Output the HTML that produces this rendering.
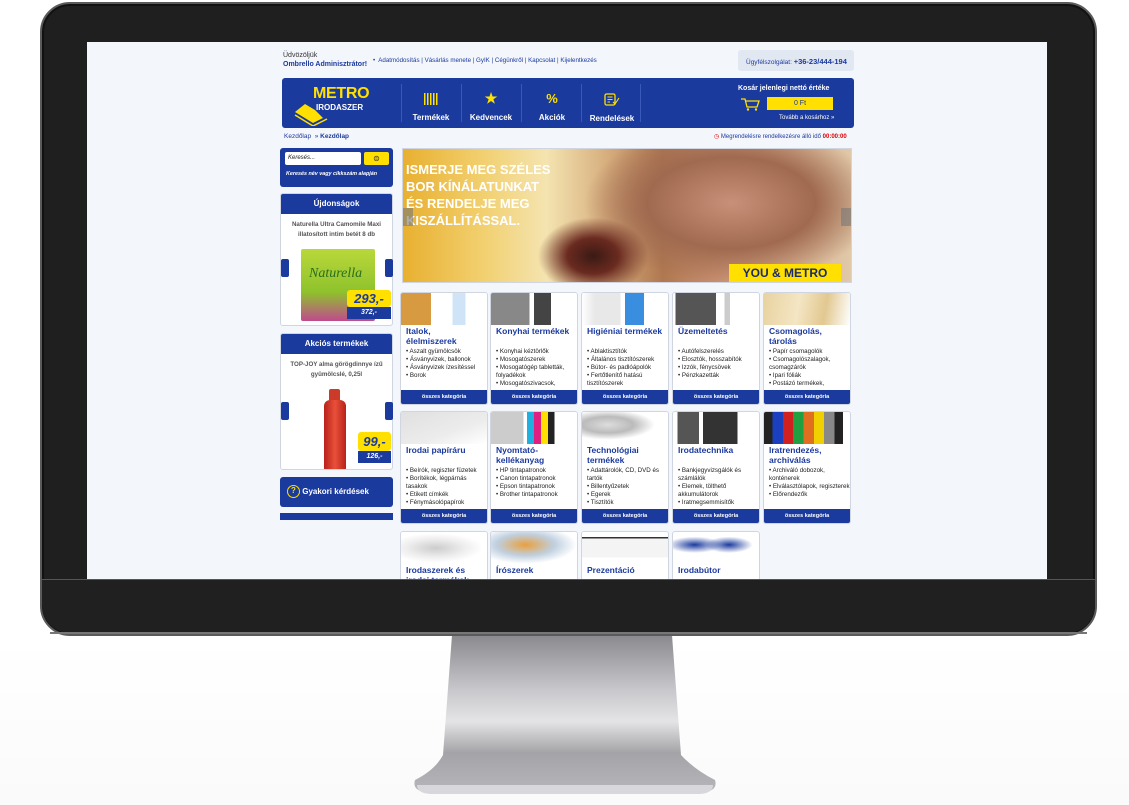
<!DOCTYPE html>
<html><head><meta charset="utf-8"><style>
*{margin:0;padding:0;box-sizing:border-box}
body{width:1129px;height:805px;background:#fff;position:relative;overflow:hidden;font-family:"Liberation Sans",Arial,sans-serif}
.a{position:absolute}
.bezel{left:40px;top:2px;width:1057px;height:634px;background:#1f1f1f;border-radius:30px;border:2px solid #5a5a5a;box-shadow:inset 0 0 0 2px #111}
.screen{left:87px;top:42px;width:960px;height:537px;background:#f3f6fb;overflow:hidden}
.blue{background:#1b3a9e}
.t{font-size:7px;color:#333;white-space:nowrap}
.card{position:absolute;width:88px;height:113px;background:#fff;border:1px solid #cfd6e2;border-radius:3px;overflow:hidden}
.card h4{position:absolute;left:5px;top:33px;font-size:8.5px;color:#1b3a9e;line-height:10px;font-weight:bold}
.card ul{position:absolute;left:5px;top:55px;font-size:6.2px;color:#222;line-height:8px;list-style:none;width:82px}
.card ul li:before{content:"• ";}
.card .btn{position:absolute;left:0;bottom:0;width:100%;height:14px;background:#1b3a9e;color:#fff;font-size:5.5px;font-weight:bold;text-align:center;line-height:14px}
.card .img{position:absolute;left:0;top:0;width:100%;height:32px}
.side{position:absolute;left:280px;width:113px;background:#fff;border:1px solid #cfd6e2;border-radius:3px;overflow:hidden}
.side .hd{height:20px;background:#1b3a9e;color:#fff;font-size:8px;font-weight:bold;text-align:center;line-height:20px}
.arrow{position:absolute;width:8px;height:18px;background:#1b3a9e;border-radius:2px}
.nav{position:absolute;top:78px;width:60px;height:50px;text-align:center;color:#fff;font-size:8px;font-weight:bold}
</style></head><body>
<div class="a" style="left:0;top:640px;width:1129px;height:165px;background:linear-gradient(#fff,#fafafa)"></div>
<svg class="a" style="left:395px;top:630px" width="340" height="175">
<defs><linearGradient id="g" x1="0" y1="0" x2="0" y2="1"><stop offset="0" stop-color="#8a8a8e"/><stop offset=".35" stop-color="#c8c8cc"/><stop offset=".55" stop-color="#e4e4e6"/><stop offset=".75" stop-color="#a4a4a8"/><stop offset="1" stop-color="#b6b6ba"/></linearGradient></defs>
<path d="M57 5 L277 5 L286 125 Q300 140 320 150 Q323 160 310 162 L30 162 Q17 160 20 150 Q40 140 48 125 Z" fill="url(#g)"/>
<path d="M22 155 L318 155 Q318 163 305 164 L35 164 Q22 163 22 155Z" fill="#d8d8dc"/>
</svg>
<div class="a bezel"></div>
<div class="a screen"></div>
<div class="a t" style="left:283px;top:52px;color:#333">Üdvözöljük</div>
<div class="a t" style="left:283px;top:61px;color:#1b3a9e;font-weight:bold">Ombrello Adminisztrátor!</div>
<div class="a t" style="left:373px;top:57px;font-size:6.2px;color:#1b3a9e">•&nbsp; Adatmódosítás | Vásárlás menete | GyIK | Cégünkről | Kapcsolat | Kijelentkezés</div>
<div class="a" style="left:738px;top:50px;width:116px;height:21px;background:#e2e8f2;border-radius:3px"></div>
<div class="a t" style="left:746px;top:57px;font-size:6.5px;color:#1b3a9e">Ügyfélszolgálat: <b style="font-size:7.5px">+36-23/444-194</b></div>
<div class="a blue" style="left:282px;top:78px;width:572px;height:50px;border-radius:3px"></div>
<div class="a" style="left:313px;top:85px;font-size:16px;font-weight:900;color:#ffe000;letter-spacing:-0.3px">METRO</div>
<div class="a" style="left:316px;top:103px;font-size:8px;font-weight:bold;color:#fff">IRODASZER</div>
<svg class="a" style="left:293px;top:100px" width="40" height="26"><path d="M2 12 L12 4 L22 10 L30 18 L20 23 Z" fill="#ffe000"/><path d="M2 15 L20 26 L34 19" stroke="#ffe000" fill="none" stroke-width="1.5"/></svg>
<div class="a" style="left:401px;top:84px;width:1px;height:38px;background:#3a58b8"></div>
<div class="a" style="left:461px;top:84px;width:1px;height:38px;background:#3a58b8"></div>
<div class="a" style="left:521px;top:84px;width:1px;height:38px;background:#3a58b8"></div>
<div class="a" style="left:581px;top:84px;width:1px;height:38px;background:#3a58b8"></div>
<div class="a" style="left:640px;top:84px;width:1px;height:38px;background:#3a58b8"></div>
<div class="nav" style="left:401px"><div style="margin-top:15px;height:12px;width:15px;margin-left:23px;background:repeating-linear-gradient(90deg,#ffe000 0 1.5px,transparent 1.5px 3px)"></div><div style="margin-top:8px">Termékek</div></div>
<div class="nav" style="left:461px"><div style="margin-top:12px;height:14px;color:#ffe000;font-size:14px">★</div><div style="margin-top:9px">Kedvencek</div></div>
<div class="nav" style="left:522px"><div style="margin-top:13px;height:14px;color:#ffe000;font-size:13px">%</div><div style="margin-top:8px">Akciók</div></div>
<div class="nav" style="left:582px"><svg style="margin-top:15px" width="16" height="13"><rect x="1" y="1" width="10" height="11" rx="1.5" stroke="#ffe000" fill="none" stroke-width="1.3"/><path d="M3.5 4H8.5M3.5 6.5H8.5M3.5 9H6M9 9L11 11L15 5" stroke="#ffe000" fill="none" stroke-width="1.1"/></svg><div style="margin-top:6px">Rendelések</div></div>
<div class="a" style="left:738px;top:85px;font-size:7px;font-weight:bold;color:#fff">Kosár jelenlegi nettó értéke</div>
<svg class="a" style="left:740px;top:97px" width="20" height="14"><path d="M1 2 L5 2 L7 10 L17 10 L19 4 L6 4" stroke="#ffe000" fill="none" stroke-width="1.3"/><circle cx="8" cy="12.5" r="1.2" fill="#ffe000"/><circle cx="16" cy="12.5" r="1.2" fill="#ffe000"/></svg>
<div class="a" style="left:767px;top:97px;width:66px;height:13px;background:#ffe000;font-size:7px;color:#1b3a9e;text-align:center;line-height:13px">0 Ft</div>
<div class="a" style="left:779px;top:115px;font-size:6px;color:#fff">Tovább a kosárhoz »</div>
<div class="a t" style="left:284px;top:133px;font-size:6.5px;color:#1b3a9e">Kezdőlap &nbsp;» <b>Kezdőlap</b></div>
<div class="a t" style="left:714px;top:133px;font-size:6px;color:#1b3a9e"><span style="color:#d00">◷</span> Megrendelésre rendelkezésre álló idő <b style="color:#d00">00:00:00</b></div>
<div class="a blue" style="left:280px;top:148px;width:113px;height:39px;border-radius:3px"></div>
<div class="a" style="left:285px;top:152px;width:76px;height:13px;background:#fff;border-radius:2px;font-size:6px;font-style:italic;padding:3px 3px;color:#222">Keresés...</div>
<div class="a" style="left:364px;top:152px;width:25px;height:13px;background:#ffe000;border-radius:2px;text-align:center;font-size:8px;line-height:13px;color:#333">⊜</div>
<div class="a" style="left:286px;top:171px;font-size:5.4px;font-style:italic;font-weight:bold;color:#fff">Keresés név vagy cikkszám alapján</div>
<div class="side" style="top:193px;height:133px"><div class="hd">Újdonságok</div>
<div style="font-size:6.2px;color:#555;font-weight:bold;text-align:center;margin-top:6px;line-height:10px">Naturella Ultra Camomile Maxi<br>illatosított intim betét 8 db</div>
<div class="a" style="left:20px;top:55px;width:74px;height:72px;background:linear-gradient(#b9d83a,#8fc22c 60%,#c04a8e);border-radius:2px"></div>
<div class="a" style="left:28px;top:72px;font-size:14px;font-style:italic;color:#2a6d1e;font-family:'Liberation Serif',serif">Naturella</div>
<div class="a" style="left:66px;top:96px;width:44px;height:17px;background:#ffe000;border-radius:3px;color:#1b3a9e;font-size:13px;font-weight:bold;font-style:italic;text-align:center;line-height:17px">293,-</div>
<div class="a" style="left:66px;top:113px;width:44px;height:12px;background:#1b3a9e;color:#fff;font-size:7px;font-weight:bold;font-style:italic;text-align:center;line-height:12px">372,-</div>
</div>
<div class="arrow" style="left:281px;top:259px"></div><div class="arrow" style="left:385px;top:259px"></div>
<div class="side" style="top:333px;height:137px"><div class="hd">Akciós termékek</div>
<div style="font-size:6.2px;color:#555;font-weight:bold;text-align:center;margin-top:6px;line-height:10px">TOP-JOY alma görögdinnye ízű<br>gyümölcslé, 0,25l</div>
<div class="a" style="left:48px;top:55px;width:11px;height:12px;background:#cc3a2a;border-radius:2px 2px 0 0"></div>
<div class="a" style="left:43px;top:66px;width:22px;height:70px;background:linear-gradient(90deg,#b8221a,#e8503a,#b8221a);border-radius:6px 6px 2px 2px"></div>
<div class="a" style="left:77px;top:98px;width:33px;height:19px;background:#ffe000;border-radius:3px;color:#1b3a9e;font-size:13px;font-weight:bold;font-style:italic;text-align:center;line-height:19px">99,-</div>
<div class="a" style="left:77px;top:117px;width:33px;height:12px;background:#1b3a9e;color:#fff;font-size:7px;font-weight:bold;font-style:italic;text-align:center;line-height:12px">126,-</div>
</div>
<div class="arrow" style="left:281px;top:402px"></div><div class="arrow" style="left:385px;top:402px"></div>
<div class="a blue" style="left:280px;top:477px;width:113px;height:30px;border-radius:3px;color:#fff;font-size:8px;font-weight:bold;line-height:30px;padding-left:7px"><span style="display:inline-block;width:13px;height:13px;border:1.5px solid #ffe000;border-radius:50%;color:#ffe000;text-align:center;line-height:10px;font-size:8px;vertical-align:middle">?</span> Gyakori kérdések</div>
<div class="a blue" style="left:280px;top:513px;width:113px;height:7px"></div>
<div class="a" style="left:402px;top:148px;width:450px;height:135px;border:1px solid #cfd6e2;overflow:hidden;background:linear-gradient(90deg,#e8b030 0%,#f2d070 18%,#f4e4b0 32%,#d8b080 45%,#b07850 58%,#c89070 70%,#d8b090 85%,#e0c8a8 100%)">
<div class="a" style="left:180px;top:0;width:270px;height:135px;background:radial-gradient(ellipse at 55% 40%,#c89078 0,#a06a50 40%,transparent 70%)"></div>
<div class="a" style="left:130px;top:65px;width:120px;height:70px;background:radial-gradient(ellipse at 50% 60%,#3a1a14 0,#6a2a20 30%,transparent 65%)"></div>
<div class="a" style="left:3px;top:12px;font-size:13px;font-weight:bold;color:#fff;line-height:17px">ISMERJE MEG SZÉLES<br>BOR KÍNÁLATUNKAT<br>ÉS RENDELJE MEG<br>KISZÁLLÍTÁSSAL.</div>
<div class="a" style="left:326px;top:115px;width:112px;height:18px;background:#ffe000;font-size:12px;font-weight:900;color:#1b2a6e;text-align:center;line-height:18px">YOU &amp; METRO</div>
<div class="a" style="left:0;top:59px;width:10px;height:18px;background:rgba(120,120,120,.6)"></div>
<div class="a" style="left:438px;top:59px;width:10px;height:18px;background:rgba(120,120,120,.6)"></div>
</div>
<div class="card" style="left:400px;top:292px"><div class="img" style="background:linear-gradient(90deg,#d89a40 0 35%,#fff 35% 60%,#cfe4f6 60% 75%,#fff 75%)"></div><h4>Italok,<br>élelmiszerek</h4><ul><li>Aszalt gyümölcsök</li><li>Ásványvizek, ballonok</li><li>Ásványvizek ízesítéssel</li><li>Borok</li></ul><div class="btn">összes kategória</div></div>
<div class="card" style="left:490px;top:292px"><div class="img" style="background:linear-gradient(90deg,#888 0 45%,#fff 45% 50%,#444 50% 70%,#fff 70%)"></div><h4>Konyhai termékek</h4><ul><li>Konyhai kéztörlők</li><li>Mosogatószerek</li><li>Mosogatógép tabletták, folyadékok</li><li>Mosogatószivacsok,</li></ul><div class="btn">összes kategória</div></div>
<div class="card" style="left:581px;top:292px"><div class="img" style="background:linear-gradient(90deg,#fff 0,#e8e8e8 15% 45%,#fff 45% 50%,#3a8ee0 50% 72%,#fff 72%)"></div><h4>Higiéniai termékek</h4><ul><li>Ablaktisztítók</li><li>Általános tisztítószerek</li><li>Bútor- és padlóápolók</li><li>Fertőtlenítő hatású tisztítószerek</li></ul><div class="btn">összes kategória</div></div>
<div class="card" style="left:672px;top:292px"><div class="img" style="background:linear-gradient(90deg,#fff 0 3%,#555 3% 50%,#fff 50% 60%,#ccc 60% 66%,#fff 66%)"></div><h4>Üzemeltetés</h4><ul><li>Autófelszerelés</li><li>Elosztók, hosszabítók</li><li>Izzók, fénycsövek</li><li>Pénzkazetták</li></ul><div class="btn">összes kategória</div></div>
<div class="card" style="left:763px;top:292px"><div class="img" style="background:linear-gradient(100deg,#e8d2a0,#f4e6c4 40%,#e2c890 70%,#fff)"></div><h4>Csomagolás,<br>tárolás</h4><ul><li>Papír csomagolók</li><li>Csomagolószalagok, csomagzárók</li><li>Ipari fóliák</li><li>Postázó termékek,</li></ul><div class="btn">összes kategória</div></div>
<div class="card" style="left:400px;top:411px"><div class="img" style="background:linear-gradient(160deg,#e0e0e0,#ececec 60%,#fff)"></div><h4>Irodai papíráru</h4><ul><li>Beírók, regiszter füzetek</li><li>Borítékok, légpárnás tasakok</li><li>Etikett címkék</li><li>Fénymásolópapírok</li></ul><div class="btn">összes kategória</div></div>
<div class="card" style="left:490px;top:411px"><div class="img" style="background:linear-gradient(90deg,#ccc 0 38%,#fff 38% 42%,#20b0e0 42% 50%,#e02080 50% 58%,#ffe000 58% 66%,#222 66% 74%,#fff 74%)"></div><h4>Nyomtató-<br>kellékanyag</h4><ul><li>HP tintapatronok</li><li>Canon tintapatronok</li><li>Epson tintapatronok</li><li>Brother tintapatronok</li></ul><div class="btn">összes kategória</div></div>
<div class="card" style="left:581px;top:411px"><div class="img" style="background:radial-gradient(ellipse at 30% 40%,#ddd 0,#bbb 30%,#fff 55%)"></div><h4>Technológiai<br>termékek</h4><ul><li>Adattárolók, CD, DVD és tartók</li><li>Billentyűzetek</li><li>Egerek</li><li>Tisztítók</li></ul><div class="btn">összes kategória</div></div>
<div class="card" style="left:672px;top:411px"><div class="img" style="background:linear-gradient(90deg,#fff 0 5%,#555 5% 30%,#fff 30% 35%,#333 35% 75%,#fff 75%)"></div><h4>Irodatechnika</h4><ul><li>Bankjegyvizsgálók és számlálók</li><li>Elemek, tölthető akkumulátorok</li><li>Iratmegsemmisítők</li></ul><div class="btn">összes kategória</div></div>
<div class="card" style="left:763px;top:411px"><div class="img" style="background:linear-gradient(90deg,#222 0 10%,#1a40c0 10% 22%,#d02020 22% 34%,#20a040 34% 46%,#e07020 46% 58%,#f0d000 58% 70%,#888 70% 82%,#222 82% 92%,#fff 92%)"></div><h4>Iratrendezés,<br>archiválás</h4><ul><li>Archiváló dobozok, konténerek</li><li>Elválasztólapok, regiszterek</li><li>Előrendezők</li></ul><div class="btn">összes kategória</div></div>
<div class="card" style="left:400px;top:531px;height:60px"><div class="img" style="background:radial-gradient(ellipse at 40% 50%,#ccc,#eee 40%,#fff 65%)"></div><h4>Irodaszerek és<br>irodai termékek</h4></div>
<div class="card" style="left:490px;top:531px;height:60px"><div class="img" style="background:radial-gradient(ellipse at 40% 40%,#e8a040,#c0d0e0 40%,#fff 70%)"></div><h4>Írószerek</h4></div>
<div class="card" style="left:581px;top:531px;height:60px"><div class="img" style="background:linear-gradient(#fff 0 15%,#333 15% 20%,#f4f4f4 20% 80%,#fff 80%)"></div><h4>Prezentáció</h4></div>
<div class="card" style="left:672px;top:531px;height:60px"><div class="img" style="background:radial-gradient(ellipse at 25% 40%,#1b3a9e,transparent 30%),radial-gradient(ellipse at 65% 40%,#1b3a9e,transparent 30%)"></div><h4>Irodabútor</h4></div>
<div class="a" style="left:42px;top:579px;width:1053px;height:54px;background:#202020;border-radius:0 0 28px 28px;border-top:1px solid #555"></div>
<div class="a" style="left:50px;top:632px;width:1037px;height:2px;background:#777"></div>
</body></html>
